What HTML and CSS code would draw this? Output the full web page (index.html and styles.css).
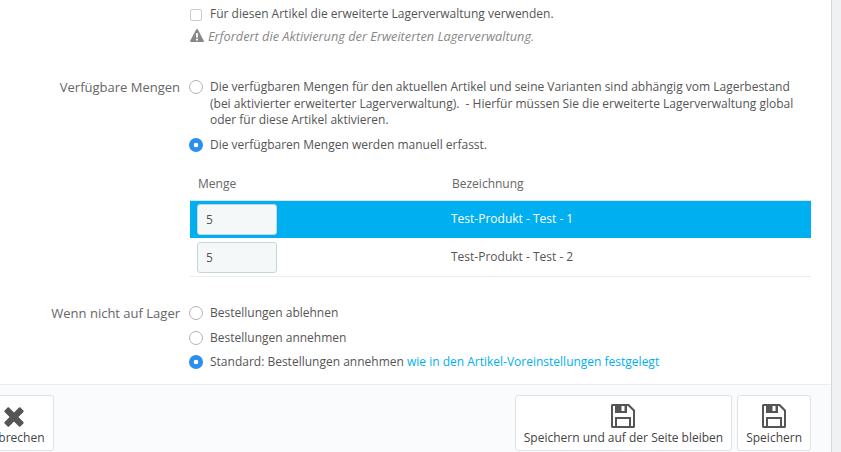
FILE: index.html
```html
<!DOCTYPE html>
<html lang="de">
<head>
  <meta charset="UTF-8" />
  <title>Artikel bearbeiten</title>
  <link rel="stylesheet" href="styles.css">
</head>
<body>

<main class="panel">
  <div class="form-body">

    <div class="form-row first-row">
      <div class="row-label"></div>
      <div class="row-fields">
        <label class="option">
          <span class="checkbox"></span>
          <span>Für diesen Artikel die erweiterte Lagerverwaltung verwenden.</span>
        </label>
        <p class="hint">
          <svg class="hint-icon" viewBox="0 0 14 13"><path fill-rule="evenodd" d="M7 0c.4 0 .7.2.9.5l5.900 11.200c.4.6-.1 1.300-.8 1.300H1c-.7 0-1.200-.7-.8-1.300L6.100.5C6.300.2 6.600 0 7 0zM5.900 4.200l.3 4.600h1.600l.3-4.600H5.900zm.1 5.600v1.700h2V9.800H6z"/></svg>
          <span>Erfordert die Aktivierung der Erweiterten Lagerverwaltung.</span>
        </p>
      </div>
    </div>

    <div class="form-row stock-row">
      <div class="row-label">Verfügbare Mengen</div>
      <div class="row-fields">
        <label class="option">
          <span class="radio"></span>
          <span>Die verfügbaren Mengen für den aktuellen Artikel und seine Varianten sind abhängig vom Lagerbestand (bei aktivierter erweiterter Lagerverwaltung). &nbsp;- Hierfür müssen Sie die erweiterte Lagerverwaltung global oder für diese Artikel aktivieren.</span>
        </label>
        <label class="option">
          <span class="radio checked"></span>
          <span>Die verfügbaren Mengen werden manuell erfasst.</span>
        </label>

        <table class="qty-table">
          <thead>
            <tr>
              <th class="col-qty">Menge</th>
              <th class="col-name">Bezeichnung</th>
            </tr>
          </thead>
          <tbody>
            <tr class="highlight">
              <td class="col-qty"><input class="qty-input" type="text" value="5"></td>
              <td>Test-Produkt - Test - 1</td>
            </tr>
            <tr>
              <td class="col-qty"><input class="qty-input" type="text" value="5"></td>
              <td>Test-Produkt - Test - 2</td>
            </tr>
          </tbody>
        </table>
      </div>
    </div>

    <div class="form-row order-row">
      <div class="row-label">Wenn nicht auf Lager</div>
      <div class="row-fields">
        <label class="option">
          <span class="radio"></span>
          <span>Bestellungen ablehnen</span>
        </label>
        <label class="option">
          <span class="radio"></span>
          <span>Bestellungen annehmen</span>
        </label>
        <label class="option">
          <span class="radio checked"></span>
          <span>Standard: Bestellungen annehmen <a href="#">wie in den Artikel-Voreinstellungen festgelegt</a></span>
        </label>
      </div>
    </div>

  </div>

  <footer class="panel-footer">
    <button class="btn btn-cancel" type="button">
      <svg class="btn-icon icon-x" viewBox="0 0 20 20"><path fill="#555" d="M5 .6 10 5.600 15 .6c.4-.4 1-.4 1.400 0l3 3c.4.400.4 1 0 1.400l-5 5 5 5c.4.400.4 1 0 1.400l-3 3c-.4.400-1 .4-1.400 0l-5-5-5 5c-.4.400-1 .4-1.400 0l-3-3c-.4-.4-.4-1 0-1.400l5-5-5-5c-.4-.4-.4-1 0-1.400l3-3C4 .2 4.600.2 5 .6z"/></svg>
      <span>Abbrechen</span>
    </button>
    <div class="footer-right">
      <button class="btn" type="button">
        <svg class="btn-icon" viewBox="0 0 24 24"><path fill="#555" fill-rule="evenodd" d="M1.500 0H18l6 6v16.500c0 .8-.7 1.500-1.500 1.500h-21C.7 24 0 23.300 0 22.500v-21C0 .7.700 0 1.500 0zM2 2v20h2v-9h16v9h2V7l-5-5h-1v7H4V2H2zm4 13v7h12v-7H6zM10.500 2v5h3V2h-3z"/></svg>
        <span>Speichern und auf der Seite bleiben</span>
      </button>
      <button class="btn" type="button">
        <svg class="btn-icon" viewBox="0 0 24 24"><path fill="#555" fill-rule="evenodd" d="M1.500 0H18l6 6v16.500c0 .8-.7 1.500-1.500 1.500h-21C.7 24 0 23.300 0 22.500v-21C0 .7.700 0 1.500 0zM2 2v20h2v-9h16v9h2V7l-5-5h-1v7H4V2H2zm4 13v7h12v-7H6zM10.500 2v5h3V2h-3z"/></svg>
        <span>Speichern</span>
      </button>
    </div>
  </footer>
</main>

</body>
</html>
```

FILE: styles.css
```css
html, body {
  height: 100%;
}

body {
  margin: 0;
  overflow: hidden;
  background: #eff1f2;
  color: #555;
  font-family: "Open Sans", sans-serif;
  font-size: 12px;
  line-height: 16.5px;
}

.panel {
  width: 832px;
  height: 452px;
  box-sizing: border-box;
  background: #fff;
  border-right: 1px solid #d3d8db;
  display: flex;
  flex-direction: column;
}

.form-body {
  flex: 1;
  padding-top: 6px;
}

.form-row {
  display: flex;
}

.row-label {
  width: 180px;
  flex: none;
  text-align: right;
  font-size: 13px;
  color: #666;
}

.row-fields {
  flex: 1;
  padding-left: 9px;
  padding-right: 20px;
}

.stock-row {
  margin-top: 35px;
}

.order-row {
  margin-top: 28px;
}

.option {
  display: flex;
  gap: 7px;
  margin-bottom: 8px;
  color: #555;
}

.checkbox {
  flex: none;
  width: 10px;
  height: 10px;
  margin: 3px 1px 0 1px;
  border: 1px solid #ccc;
  border-radius: 2px;
  background: #fff;
}

.radio {
  flex: none;
  width: 12px;
  height: 12px;
  margin-top: 1px;
  border: 1px solid #b3b3b3;
  border-radius: 50%;
  background: #fff;
}

.radio.checked {
  width: 14px;
  height: 14px;
  border: 0;
  background: radial-gradient(circle, #fff 0, #fff 2px, #2b8ff0 2.6px);
}

.hint {
  margin: -3px 0 0;
  padding-left: 1px;
  color: #888;
  font-size: 12.75px;
  font-style: italic;
  display: flex;
  align-items: center;
  gap: 4px;
}

.hint-icon {
  width: 14px;
  height: 13px;
  fill: #888;
  flex: none;
}

.qty-table {
  width: 621px;
  margin: 16px 0 0 1px;
  border-collapse: collapse;
}

.qty-table th {
  height: 31px;
  padding: 0;
  text-align: left;
  font-weight: 400;
  color: #666;
  border-bottom: 1px solid #d3e6ef;
}

.qty-table td {
  height: 38px;
  padding: 0;
  border-bottom: 1px solid #eaedef;
}

.qty-table th.col-qty {
  padding-left: 8px;
  width: 253px;
}

.qty-table th.col-name {
  padding-left: 1px;
}

.qty-table td.col-qty {
  padding-left: 7px;
  width: 254px;
}

.qty-table .highlight td {
  height: 37px;
  background: #00aff0;
  color: #fff;
  border-bottom: 0;
}

.qty-input {
  display: block;
  width: 80px;
  height: 31px;
  box-sizing: border-box;
  padding: 0 8px;
  border: 1px solid #c7d6db;
  border-radius: 3px;
  background: #f5f8f9;
  color: #555;
  font: inherit;
}

a {
  color: #00aff0;
  text-decoration: none;
}

.panel-footer {
  height: 68px;
  flex: none;
  box-sizing: border-box;
  padding-top: 10px;
  border-top: 1px solid #eaedef;
  background: #fafbfc;
  display: flex;
  justify-content: space-between;
}

.footer-right {
  display: flex;
  gap: 5px;
  padding-right: 20px;
}

.btn {
  height: 56px;
  box-sizing: border-box;
  padding: 0 8px 4px;
  border: 1px solid #dfe3e5;
  border-radius: 3px;
  background: #fff;
  color: #444;
  font: inherit;
  display: flex;
  flex-direction: column;
  align-items: center;
  justify-content: flex-end;
}

.btn-cancel {
  margin-left: -26px;
  width: 80px;
}

.btn-icon {
  width: 24px;
  height: 24px;
  margin-bottom: 2px;
}

.icon-x {
  width: 20px;
  height: 20px;
  margin-bottom: 3px;
}
```
